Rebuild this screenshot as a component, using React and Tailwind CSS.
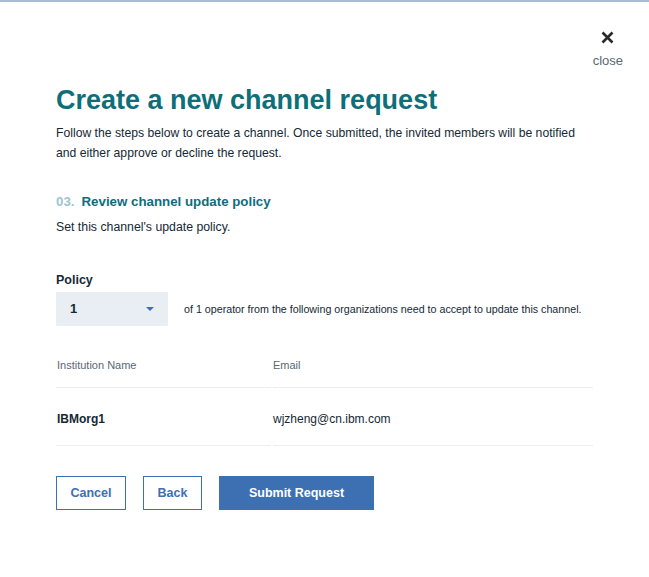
export default function App() {
  const members = [{ org: 'IBMorg1', email: 'wjzheng@cn.ibm.com' }];

  return (
    <div className="min-h-[577px] w-[649px] bg-white border-t-2 border-[#a9bcd3] font-['Liberation_Sans',Arial,sans-serif] text-[#152935]">
      {/* Close */}
      <div className="flex justify-end pt-[29px] pr-[26px]">
        <button className="flex flex-col items-center gap-[9px]">
          <svg width="13" height="13" viewBox="0 0 13 13">
            <path d="M1.5 1.5 L11.5 11.5 M11.5 1.5 L1.5 11.5" stroke="#2a2a2a" strokeWidth="2.6" />
          </svg>
          <span className="text-[13px] leading-[16px] text-[#5a6872]">close</span>
        </button>
      </div>

      <div className="pl-[56px] pr-[56px]">
        <h1 className="mt-[15px] text-[27px] leading-[32px] font-bold text-[#0e6f79]">
          Create a new channel request
        </h1>
        <p className="mt-[7px] max-w-[528px] text-[12.2px] leading-[20px]">
          Follow the steps below to create a channel. Once submitted, the invited members will be notified and either approve or decline the request.
        </p>

        {/* Step */}
        <h2 className="mt-[29px] text-[13.3px] leading-[20px] font-bold text-[#0f6d7b]">
          <span className="text-[#9cc6cf] mr-[7px]">03.</span>Review channel update policy
        </h2>
        <p className="mt-[5px] text-[12.3px] leading-[20px]">Set this channel's update policy.</p>

        {/* Policy */}
        <label className="block mt-[33px] text-[12.5px] leading-[20px] font-bold">Policy</label>
        <div className="mt-[2px] flex items-center gap-[16px]">
          <div className="flex h-[34px] w-[112px] shrink-0 items-center justify-between bg-[#e9eef5] pl-[14px] pr-[14px]">
            <span className="text-[13px] font-bold">1</span>
            <svg width="8" height="4" viewBox="0 0 8 4">
              <path d="M0 0 H8 L4 4 Z" fill="#3d70b2" />
            </svg>
          </div>
          <span className="whitespace-nowrap text-[10.7px]">
            of 1 operator from the following organizations need to accept to update this channel.
          </span>
        </div>

        {/* Members table */}
        <div className="mt-[29px] grid grid-cols-[215px_1fr] gap-x-[2px] w-[537px] text-[11px]">
          <div className="pl-[1px] pb-[12px] leading-[20px] text-[#5a6872] border-b border-[#eeeeee]">Institution Name</div>
          <div className="pb-[12px] leading-[20px] text-[#5a6872] border-b border-[#eeeeee]">Email</div>
          {members.map((m) => (
            <div key={m.org} className="contents">
              <div className="pl-[1px] pt-[21px] pb-[16px] leading-[20px] text-[12px] font-bold border-b border-[#eeeeee]">{m.org}</div>
              <div className="pt-[21px] pb-[16px] leading-[20px] text-[12px] border-b border-[#eeeeee]">{m.email}</div>
            </div>
          ))}
        </div>

        {/* Actions */}
        <div className="mt-[30px] flex gap-[17px]">
          <button className="h-[34px] w-[70px] border border-[#3d70b2] text-[12.5px] font-bold text-[#3d70b2]">Cancel</button>
          <button className="h-[34px] w-[59px] border border-[#3d70b2] text-[12.5px] font-bold text-[#3d70b2]">Back</button>
          <button className="h-[34px] w-[155px] bg-[#3d70b2] text-[12.5px] font-bold text-white">Submit Request</button>
        </div>
      </div>
    </div>
  );
}
